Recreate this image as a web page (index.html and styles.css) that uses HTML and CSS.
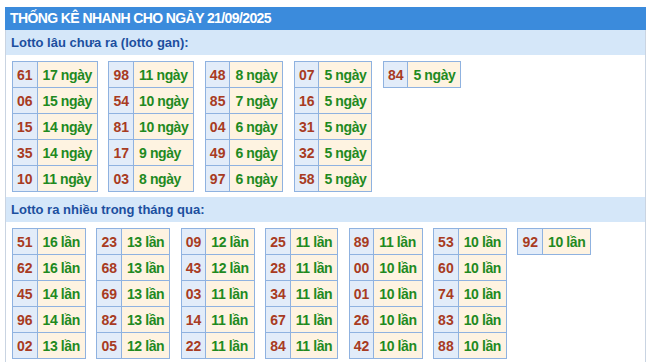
FILE: index.html
```html
<!DOCTYPE html>
<html lang="vi">
<head>
<meta charset="utf-8">
<title>Thống kê nhanh</title>
<link rel="stylesheet" href="styles.css">
</head>
<body>
<div class="box">
  <div class="title">THỐNG KÊ NHANH CHO NGÀY 21/09/2025</div>
  <div class="subtitle">Lotto lâu chưa ra (lotto gan):</div>
  <div class="group">
    <table class="t"><tr><td class="n">61</td><td class="v">17 ngày</td></tr><tr><td class="n">06</td><td class="v">15 ngày</td></tr><tr><td class="n">15</td><td class="v">14 ngày</td></tr><tr><td class="n">35</td><td class="v">14 ngày</td></tr><tr><td class="n">10</td><td class="v">11 ngày</td></tr></table>
    <table class="t"><tr><td class="n">98</td><td class="v">11 ngày</td></tr><tr><td class="n">54</td><td class="v">10 ngày</td></tr><tr><td class="n">81</td><td class="v">10 ngày</td></tr><tr><td class="n">17</td><td class="v">9 ngày</td></tr><tr><td class="n">03</td><td class="v">8 ngày</td></tr></table>
    <table class="t"><tr><td class="n">48</td><td class="v">8 ngày</td></tr><tr><td class="n">85</td><td class="v">7 ngày</td></tr><tr><td class="n">04</td><td class="v">6 ngày</td></tr><tr><td class="n">49</td><td class="v">6 ngày</td></tr><tr><td class="n">97</td><td class="v">6 ngày</td></tr></table>
    <table class="t"><tr><td class="n">07</td><td class="v">5 ngày</td></tr><tr><td class="n">16</td><td class="v">5 ngày</td></tr><tr><td class="n">31</td><td class="v">5 ngày</td></tr><tr><td class="n">32</td><td class="v">5 ngày</td></tr><tr><td class="n">58</td><td class="v">5 ngày</td></tr></table>
    <table class="t"><tr><td class="n">84</td><td class="v">5 ngày</td></tr></table>
  </div>
  <div class="subtitle">Lotto ra nhiều trong tháng qua:</div>
  <div class="group">
    <table class="t"><tr><td class="n">51</td><td class="v">16 lần</td></tr><tr><td class="n">62</td><td class="v">16 lần</td></tr><tr><td class="n">45</td><td class="v">14 lần</td></tr><tr><td class="n">96</td><td class="v">14 lần</td></tr><tr><td class="n">02</td><td class="v">13 lần</td></tr></table>
    <table class="t"><tr><td class="n">23</td><td class="v">13 lần</td></tr><tr><td class="n">68</td><td class="v">13 lần</td></tr><tr><td class="n">69</td><td class="v">13 lần</td></tr><tr><td class="n">82</td><td class="v">13 lần</td></tr><tr><td class="n">05</td><td class="v">12 lần</td></tr></table>
    <table class="t"><tr><td class="n">09</td><td class="v">12 lần</td></tr><tr><td class="n">43</td><td class="v">12 lần</td></tr><tr><td class="n">03</td><td class="v">11 lần</td></tr><tr><td class="n">14</td><td class="v">11 lần</td></tr><tr><td class="n">22</td><td class="v">11 lần</td></tr></table>
    <table class="t"><tr><td class="n">25</td><td class="v">11 lần</td></tr><tr><td class="n">28</td><td class="v">11 lần</td></tr><tr><td class="n">34</td><td class="v">11 lần</td></tr><tr><td class="n">67</td><td class="v">11 lần</td></tr><tr><td class="n">84</td><td class="v">11 lần</td></tr></table>
    <table class="t"><tr><td class="n">89</td><td class="v">11 lần</td></tr><tr><td class="n">00</td><td class="v">10 lần</td></tr><tr><td class="n">01</td><td class="v">10 lần</td></tr><tr><td class="n">26</td><td class="v">10 lần</td></tr><tr><td class="n">42</td><td class="v">10 lần</td></tr></table>
    <table class="t"><tr><td class="n">53</td><td class="v">10 lần</td></tr><tr><td class="n">60</td><td class="v">10 lần</td></tr><tr><td class="n">74</td><td class="v">10 lần</td></tr><tr><td class="n">83</td><td class="v">10 lần</td></tr><tr><td class="n">88</td><td class="v">10 lần</td></tr></table>
    <table class="t"><tr><td class="n">92</td><td class="v">10 lần</td></tr></table>
  </div>
</div>
</body>
</html>
```
FILE: styles.css
```css
html, body {
  margin: 0;
  padding: 0;
  background: #ffffff;
}
body {
  font-family: "Liberation Sans", Arial, sans-serif;
  padding-top: 7px;
}
.box {
  margin-left: 5px;
  width: 639px;
  border-left: 1px solid #c9d4e2;
  border-right: 1px solid #c9d4e2;
  height: 355px;
}
.title {
  background: #3b8bdc;
  color: #ffffff;
  font-weight: bold;
  font-size: 14px;
  letter-spacing: -0.6px;
  height: 23px;
  line-height: 23px;
  padding-left: 5px;
  margin-left: -1px;
  margin-right: -1px;
  white-space: nowrap;
}
.subtitle {
  background: #d5e7f9;
  color: #1c4f9f;
  font-weight: bold;
  font-size: 13px;
  height: 25px;
  line-height: 25px;
  padding-left: 5px;
}
.group {
  display: flex;
  align-items: flex-start;
  gap: 10.5px;
  padding: 6px 6px 5px 6px;
}
.t {
  border-collapse: collapse;
}
.t td {
  border: 1px solid #8fb2e0;
  height: 26px;
  padding: 0 5px;
  box-sizing: border-box;
  white-space: nowrap;
  font-size: 14px;
  font-weight: bold;
}
.t .n {
  background: #e2ecf9;
  color: #a83b22;
  text-align: center;
  padding: 0 4px;
}
.t .v {
  background: #fef3e1;
  color: #1f8a1f;
  letter-spacing: -0.4px;
}
```
